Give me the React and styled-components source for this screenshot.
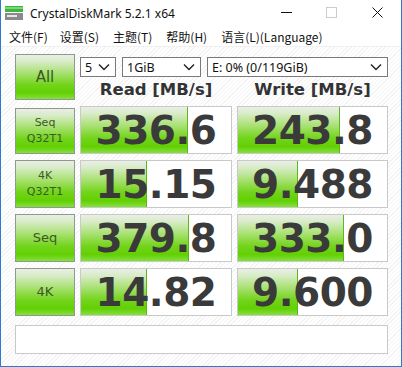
import React from 'react'
import styled, { createGlobalStyle } from 'styled-components'

const GlobalStyle = createGlobalStyle`
  html, body {
    margin: 0;
    padding: 0;
    background: #ffffff;
  }
`

const rows = [
  { label: ['Seq', 'Q32T1'], read: '336.6', write: '243.8' },
  { label: ['4K', 'Q32T1'], read: '15.15', write: '9.488' },
  { label: ['Seq'], read: '379.8', write: '333.0' },
  { label: ['4K'], read: '14.82', write: '9.600' },
]

// CrystalDiskMark draws the bar on a log scale
const barWidth = (value) => {
  const v = parseFloat(value)
  const ratio = (Math.log10(v) + 1) / 5
  return `${Math.max(0, Math.min(1, ratio)) * 100}%`
}

function Chevron() {
  return (
    <svg width="12" height="8" viewBox="0 0 12 8">
      <path d="M1 1.5 L6 6.5 L11 1.5" fill="none" stroke="#222" strokeWidth="1.4" />
    </svg>
  )
}

function AppIcon() {
  return (
    <svg width="18" height="14" viewBox="0 0 18 14">
      <rect x="0" y="0" width="18" height="6" fill="#3fb43f" />
      <rect x="0" y="1" width="18" height="2" fill="#7ad67a" />
      <rect x="0" y="7" width="18" height="7" fill="#8a8a8a" />
      <rect x="2" y="9" width="10" height="2" fill="#e6e6e6" />
    </svg>
  )
}

function Select({ value, width }) {
  return (
    <SelectBox $width={width}>
      <span>{value}</span>
      <Chevron />
    </SelectBox>
  )
}

function ResultRow({ label, read, write }) {
  return (
    <>
      <LabelButton $small={label.length > 1}>
        {label.map((l) => <span key={l}>{l}</span>)}
      </LabelButton>
      <ValueBox>
        <Bar style={{ width: barWidth(read) }} />
        <Value>{read}</Value>
      </ValueBox>
      <ValueBox>
        <Bar style={{ width: barWidth(write) }} />
        <Value>{write}</Value>
      </ValueBox>
    </>
  )
}

export default function App() {
  return (
    <>
      <GlobalStyle />
      <Window>
        <TitleBar>
          <AppIcon />
          <Title>CrystalDiskMark 5.2.1 x64</Title>
          <Controls>
            <ControlButton>
              <svg width="11" height="11" viewBox="0 0 11 11">
                <path d="M0 5.5 H11" stroke="#111" strokeWidth="1" />
              </svg>
            </ControlButton>
            <ControlButton>
              <svg width="11" height="11" viewBox="0 0 11 11">
                <rect x="0.5" y="0.5" width="10" height="10" fill="none" stroke="#cccccc" strokeWidth="1" />
              </svg>
            </ControlButton>
            <ControlButton>
              <svg width="11" height="11" viewBox="0 0 11 11">
                <path d="M0.5 0.5 L10.5 10.5 M10.5 0.5 L0.5 10.5" stroke="#111" strokeWidth="1" />
              </svg>
            </ControlButton>
          </Controls>
        </TitleBar>
        <MenuBar>
          <MenuItem>文件(F)</MenuItem>
          <MenuItem>设置(S)</MenuItem>
          <MenuItem>主题(T)</MenuItem>
          <MenuItem>帮助(H)</MenuItem>
          <MenuItem>语言(L)(Language)</MenuItem>
        </MenuBar>
        <Content>
          <Grid>
            <AllButton>All</AllButton>
            <TopRight>
              <Selects>
                <Select value="5" width={36} />
                <Select value="1GiB" width={79} />
                <Select value="E: 0% (0/119GiB)" width={181} />
              </Selects>
              <Headers>
                <Header>Read [MB/s]</Header>
                <Header>Write [MB/s]</Header>
              </Headers>
            </TopRight>
            {rows.map((r) => (
              <ResultRow key={r.read} {...r} />
            ))}
          </Grid>
          <Status />
        </Content>
      </Window>
    </>
  )
}

const Window = styled.div`
  width: 402px;
  height: 367px;
  box-sizing: border-box;
  border: 1px solid #2b7bd3;
  border-top: none;
  display: flex;
  flex-direction: column;
  background: #ffffff;
  overflow: hidden;
`

const TitleBar = styled.div`
  height: 26px;
  display: flex;
  align-items: center;
  padding-left: 4px;
  flex-shrink: 0;
`

const Title = styled.div`
  margin-left: 7px;
  font-family: "Noto Sans", sans-serif;
  font-size: 12px;
  color: #111;
  flex: 1;
`

const Controls = styled.div`
  display: flex;
  height: 100%;
`

const ControlButton = styled.div`
  width: 45px;
  display: flex;
  align-items: center;
  justify-content: center;
  padding-bottom: 2px;
  &:last-child {
    width: 46px;
    margin-right: 1px;
  }
`

const MenuBar = styled.div`
  height: 20px;
  display: flex;
  align-items: center;
  padding-left: 1px;
  flex-shrink: 0;
  border-bottom: 1px solid #f0f0f0;
`

const MenuItem = styled.div`
  padding: 0 7px;
  font-family: "Noto Sans CJK SC", sans-serif;
  font-size: 12px;
  color: #111;
  margin-right: 0;
  &:first-child {
    margin-right: -2px;
  }
`

const Content = styled.div`
  flex: 1;
  padding: 7px 13px 0 14px;
  background-color: #ffffff;
  background-image: repeating-linear-gradient(
    -45deg,
    #ffffff 0px,
    #ffffff 2px,
    #f3f3f3 2px,
    #f3f3f3 3px
  );
  display: flex;
  flex-direction: column;
`

const Grid = styled.div`
  display: grid;
  grid-template-columns: 60px 152px 151px;
  grid-template-rows: 46px repeat(4, 48px);
  column-gap: 5px;
  row-gap: 6px;

  & > :nth-child(3) {
    margin-top: 2px;
  }
`

const greenFill = `
  linear-gradient(
    to bottom,
    #e9eee5 0%,
    #d9ecc9 14%,
    #a6e06e 42%,
    #72d41a 68%,
    #62d004 86%,
    #86e03e 100%
  )
`

const LabelButton = styled.div`
  box-sizing: border-box;
  border: 1px solid #8f9a8c;
  background: ${greenFill};
  display: flex;
  flex-direction: column;
  align-items: center;
  justify-content: center;
  font-family: "DejaVu Sans", Verdana, sans-serif;
  font-size: ${(p) => (p.$small ? '11px' : '13px')};
  line-height: 16px;
  color: #3b5a25;
`

const AllButton = styled(LabelButton)`
  font-size: 15px;
`

const TopRight = styled.div`
  grid-column: 2 / 4;
  display: flex;
  flex-direction: column;
`

const Selects = styled.div`
  display: flex;
  gap: 6px;
  margin-top: 3px;
`

const SelectBox = styled.div`
  box-sizing: border-box;
  width: ${(p) => p.$width}px;
  height: 20px;
  border: 1px solid #7a7a7a;
  background: #ffffff;
  display: flex;
  align-items: center;
  justify-content: space-between;
  padding: 0 5px 0 4px;
  font-family: "Noto Sans", sans-serif;
  font-size: 12.5px;
  color: #111;
`

const Headers = styled.div`
  display: grid;
  grid-template-columns: 152px 151px;
  column-gap: 5px;
  flex: 1;
  align-items: center;
`

const Header = styled.div`
  text-align: center;
  font-family: "DejaVu Sans", Verdana, sans-serif;
  font-weight: bold;
  font-size: 16.5px;
  color: #333333;
  padding-top: 1px;
`

const ValueBox = styled.div`
  position: relative;
  box-sizing: border-box;
  border: 1px solid #c9c9c9;
  background: #ffffff;
  display: flex;
  align-items: center;
  justify-content: center;
  overflow: hidden;
`

const Bar = styled.div`
  position: absolute;
  left: 0;
  top: 0;
  bottom: 0;
  background: ${greenFill};
  border-right: 1px solid #5cb818;
`

const Value = styled.div`
  position: relative;
  font-family: "DejaVu Sans", Verdana, sans-serif;
  font-weight: bold;
  font-size: 39px;
  color: #3a3a3a;
  letter-spacing: -0.5px;
`

const Status = styled.div`
  margin-top: 9px;
  height: 29px;
  box-sizing: border-box;
  width: 373px;
  border: 1px solid #c9c9c9;
  background: #ffffff;
`
